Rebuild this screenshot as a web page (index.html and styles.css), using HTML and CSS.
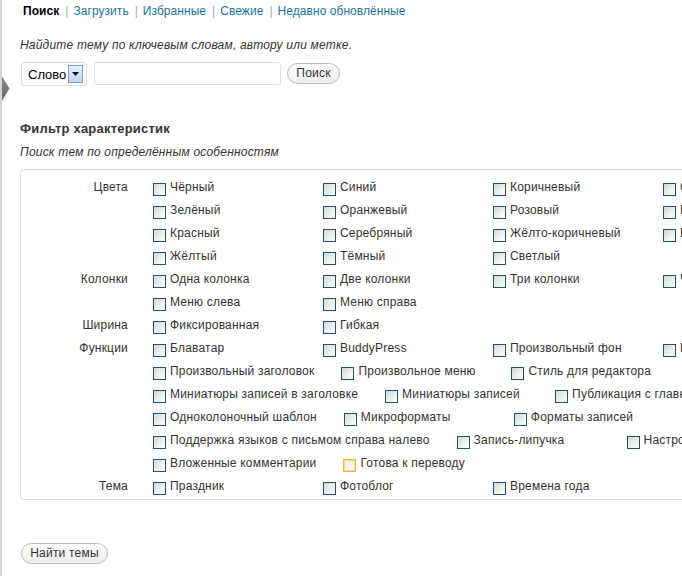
FILE: index.html
```html
<!DOCTYPE html>
<html lang="ru">
<head>
<meta charset="utf-8">
<title>Установить темы</title>
<link rel="stylesheet" href="styles.css">
</head>
<body>
<div class="page">
  <svg class="edge-arrow" width="10" height="32" viewBox="0 0 10 32" aria-hidden="true">
    <defs>
      <linearGradient id="ag" x1="0" y1="0" x2="0" y2="1">
        <stop offset="0" stop-color="#8a8a8a"/>
        <stop offset="1" stop-color="#6a6a6a"/>
      </linearGradient>
    </defs>
    <polygon points="0,0 9.5,15.5 0,31" fill="url(#ag)"/>
  </svg>

  <ul class="subnav">
    <li class="current">Поиск</li><li class="sep">|</li><li><a href="#">Загрузить</a></li><li class="sep">|</li><li><a href="#">Избранные</a></li><li class="sep">|</li><li><a href="#">Свежие</a></li><li class="sep">|</li><li><a href="#">Недавно обновлённые</a></li>
  </ul>

  <p class="hint hint-top">Найдите тему по ключевым словам, автору или метке.</p>

  <form class="search-row" onsubmit="return false">
    <div class="select">
      <span class="select-text">Слово</span>
      <span class="select-drop">
        <svg width="7" height="4" viewBox="0 0 7 4" aria-hidden="true"><polygon points="0,0 7,0 3.5,4" fill="#111"/></svg>
      </span>
    </div>
    <input class="text-input" type="text">
    <button class="pill-btn search-btn" type="button">Поиск</button>
  </form>

  <h4 class="filter-title">Фильтр характеристик</h4>
  <p class="hint hint-sub">Поиск тем по определённым особенностям</p>

  <div class="features">
    <div class="group">
      <div class="gname">Цвета</div>
      <ul class="items">
        <li class="feat"><span class="cb"></span>Чёрный</li>
        <li class="feat"><span class="cb"></span>Синий</li>
        <li class="feat"><span class="cb"></span>Коричневый</li>
        <li class="feat"><span class="cb"></span>Серый</li>
        <li class="feat"><span class="cb"></span>Зелёный</li>
        <li class="feat"><span class="cb"></span>Оранжевый</li>
        <li class="feat"><span class="cb"></span>Розовый</li>
        <li class="feat"><span class="cb"></span>Пурпурный</li>
        <li class="feat"><span class="cb"></span>Красный</li>
        <li class="feat"><span class="cb"></span>Серебряный</li>
        <li class="feat"><span class="cb"></span>Жёлто-коричневый</li>
        <li class="feat"><span class="cb"></span>Белый</li>
        <li class="feat"><span class="cb"></span>Жёлтый</li>
        <li class="feat"><span class="cb"></span>Тёмный</li>
        <li class="feat"><span class="cb"></span>Светлый</li>
      </ul>
    </div>
    <div class="group">
      <div class="gname">Колонки</div>
      <ul class="items">
        <li class="feat"><span class="cb"></span>Одна колонка</li>
        <li class="feat"><span class="cb"></span>Две колонки</li>
        <li class="feat"><span class="cb"></span>Три колонки</li>
        <li class="feat"><span class="cb"></span>Четыре колонки</li>
        <li class="feat"><span class="cb"></span>Меню слева</li>
        <li class="feat"><span class="cb"></span>Меню справа</li>
      </ul>
    </div>
    <div class="group">
      <div class="gname">Ширина</div>
      <ul class="items">
        <li class="feat"><span class="cb"></span>Фиксированная</li>
        <li class="feat"><span class="cb"></span>Гибкая</li>
      </ul>
    </div>
    <div class="group">
      <div class="gname">Функции</div>
      <ul class="items">
        <li class="feat"><span class="cb"></span>Блаватар</li>
        <li class="feat"><span class="cb"></span>BuddyPress</li>
        <li class="feat"><span class="cb"></span>Произвольный фон</li>
        <li class="feat"><span class="cb"></span>Произвольные цвета</li>
        <li class="feat"><span class="cb"></span>Произвольный заголовок</li>
        <li class="feat"><span class="cb"></span>Произвольное меню</li>
        <li class="feat"><span class="cb"></span>Стиль для редактора</li>
        <li class="feat"><span class="cb"></span>Миниатюры записей в заголовке</li>
        <li class="feat"><span class="cb"></span>Миниатюры записей</li>
        <li class="feat"><span class="cb"></span>Публикация с главной</li>
        <li class="feat"><span class="cb"></span>Одноколоночный шаблон</li>
        <li class="feat"><span class="cb"></span>Микроформаты</li>
        <li class="feat"><span class="cb"></span>Форматы записей</li>
        <li class="feat"><span class="cb"></span>Поддержка языков с письмом справа налево</li>
        <li class="feat"><span class="cb"></span>Запись-липучка</li>
        <li class="feat"><span class="cb"></span>Настройки темы</li>
        <li class="feat"><span class="cb"></span>Вложенные комментарии</li>
        <li class="feat"><span class="cb cb-hover"></span>Готова к переводу</li>
      </ul>
    </div>
    <div class="group">
      <div class="gname">Тема</div>
      <ul class="items">
        <li class="feat"><span class="cb"></span>Праздник</li>
        <li class="feat"><span class="cb"></span>Фотоблог</li>
        <li class="feat"><span class="cb"></span>Времена года</li>
      </ul>
    </div>
  </div>

  <div class="submit-row">
    <button class="pill-btn find-btn" type="button">Найти темы</button>
  </div>
</div>
</body>
</html>
```

FILE: styles.css
```css
html, body {
  margin: 0;
  padding: 0;
  overflow: hidden;
  background: #fff;
}

body {
  font-family: "Liberation Sans", Arial, sans-serif;
  font-size: 12px;
  color: #333;
  border-left: 2px solid #d4d4d4;
  min-height: 576px;
  box-sizing: border-box;
}

.page {
  position: relative;
  display: flex;
  flex-direction: column;
  align-items: flex-start;
  padding: 3px 0 0 18px;
  width: 1000px;
}

.edge-arrow {
  position: absolute;
  left: -2px;
  top: 73px;
}

.subnav {
  list-style: none;
  margin: 0 0 0 3px;
  padding: 0;
  display: flex;
  line-height: 16px;
  letter-spacing: 0.05px;
}

.subnav li {
  white-space: nowrap;
}

.subnav .current {
  font-weight: bold;
  color: #000;
}

.subnav a {
  color: #21759b;
  text-decoration: none;
}

.subnav .sep {
  color: #aaa;
  padding: 0 5px 0 6px;
}

.hint {
  margin: 0;
  font-style: italic;
  line-height: 16px;
  color: #333;
  letter-spacing: 0.2px;
}

.hint-top {
  margin-top: 18px;
}

.search-row {
  margin: 9px 0 0 1px;
  display: flex;
  align-items: flex-start;
}

.select {
  box-sizing: border-box;
  width: 66px;
  height: 24px;
  border: 1px solid #e0e0e0;
  border-radius: 3px;
  display: flex;
  align-items: center;
  padding: 0 0 0 6px;
  color: #000;
  font-size: 13px;
}

.select-text {
  flex: 1;
}

.select-drop {
  box-sizing: border-box;
  width: 15px;
  height: 18px;
  margin-right: 3px;
  border: 1px solid #7f9db9;
  background: linear-gradient(#e6eefc, #c1d3fb);
  display: flex;
  align-items: center;
  justify-content: center;
}

.text-input {
  box-sizing: border-box;
  width: 187px;
  height: 23px;
  margin: 0 0 0 7px;
  border: 1px solid #dfdfdf;
  border-radius: 3px;
  padding: 2px 4px;
  font: inherit;
}

.pill-btn {
  box-sizing: border-box;
  height: 21px;
  border: 1px solid #bbb;
  border-radius: 11px;
  background: linear-gradient(#fefefe, #ececec);
  font-family: "Liberation Sans", Arial, sans-serif;
  font-size: 12px;
  color: #333;
  padding: 0 8px;
  line-height: 19px;
  letter-spacing: 0.2px;
}

.search-btn {
  width: 53px;
  margin: 1px 0 0 6px;
}

.filter-title {
  margin: 35px 0 0 0;
  font-size: 13px;
  line-height: 16px;
  font-weight: bold;
  color: #333;
  letter-spacing: 0.2px;
}

.hint-sub {
  margin-top: 7px;
}

.features {
  box-sizing: border-box;
  margin-top: 9px;
  width: 900px;
  border: 1px solid #dfdfdf;
  border-radius: 4px;
  padding: 6px 0 1px 0;
}

.group {
  display: flex;
  align-items: flex-start;
}

.gname {
  width: 107px;
  flex: none;
  text-align: right;
  line-height: 23px;
  margin-right: 25px;
  letter-spacing: 0.2px;
}

.items {
  list-style: none;
  margin: 0;
  padding: 0;
  width: 700px;
  display: flex;
  flex-wrap: wrap;
}

.feat {
  box-sizing: border-box;
  display: flex;
  align-items: center;
  min-width: 170px;
  padding-right: 27px;
  height: 23px;
  line-height: 23px;
  white-space: nowrap;
  letter-spacing: 0.2px;
}

.cb {
  box-sizing: border-box;
  flex: none;
  width: 13px;
  height: 13px;
  margin: 3px 4px 0 0;
  border: 1px solid #1c5180;
  background: linear-gradient(135deg, #d8d8d3 0%, #f4f4f2 70%, #fff 100%);
}

.cb-hover {
  border: 1px solid #f6b53c;
  box-shadow: inset 0 0 0 1px #fbd984;
  background: linear-gradient(135deg, #ececec, #fbfbfb);
}

.submit-row {
  margin: 43px 0 0 1px;
}

.find-btn {
  width: 87px;
  height: 21px;
}
```
